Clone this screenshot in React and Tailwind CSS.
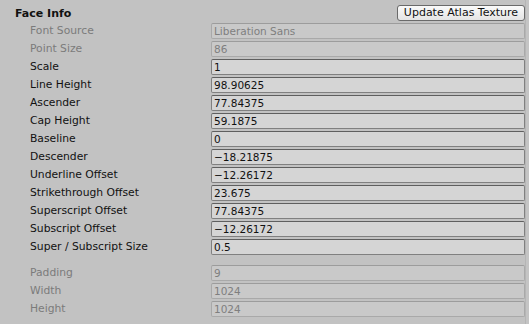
import React from "react";

const main = [
  ["Font Source", "Liberation Sans", true],
  ["Point Size", "86", true],
  ["Scale", "1"],
  ["Line Height", "98.90625"],
  ["Ascender", "77.84375"],
  ["Cap Height", "59.1875"],
  ["Baseline", "0"],
  ["Descender", "\u221218.21875"],
  ["Underline Offset", "\u221212.26172"],
  ["Strikethrough Offset", "23.675"],
  ["Superscript Offset", "77.84375"],
  ["Subscript Offset", "\u221212.26172"],
  ["Super / Subscript Size", "0.5"],
];

const atlas = [
  ["Padding", "9"],
  ["Width", "1024"],
  ["Height", "1024"],
];

function Row({ label, value, disabled }) {
  return (
    <div className="flex h-4 items-center mt-[2px] pl-[15px]">
      <span
        className={
          "w-[181px] shrink-0 leading-4 text-[10.75px] " +
          (disabled ? "text-[#7b7b7b]" : "text-[#111]")
        }
      >
        {label}
      </span>
      {disabled ? (
        <div className="flex-1 h-4 rounded-[2px] border border-[#a9a9a9] border-t-[#9c9c9c] bg-[#c9c9c9] pl-[2px] text-[10.5px] leading-[15px] text-[#7f7f7f]">
          {value}
        </div>
      ) : (
        <div className="flex-1 h-4 rounded-[2px] border border-[#808080] border-t-[#5f5f5f] bg-[#d5d5d5] pl-[2px] text-[10.5px] leading-[15px] text-[#111]">
          {value}
        </div>
      )}
    </div>
  );
}

export default function App() {
  return (
    <div className="flex w-[529px] h-[324px] bg-[#c2c2c2]">
      <div
        className="w-[525px] pl-[15px] pt-[5px] text-[11px]"
        style={{ fontFamily: '"DejaVu Sans", "Liberation Sans", sans-serif' }}
      >
        <div className="flex h-4 items-center justify-between">
          <span className="font-bold text-[#111] leading-4 pt-[2px]">Face Info</span>
          <button className="h-4 w-[128px] rounded-[3px] border border-[#6a6a6a] bg-gradient-to-b from-[#fafafa] to-[#e4e4e4] text-[11px] leading-[14px] text-[#111]">
            Update Atlas Texture
          </button>
        </div>
        {main.map(([l, v, d]) => (
          <Row key={l} label={l} value={v} disabled={d} />
        ))}
        <div className="h-2" />
        {atlas.map(([l, v]) => (
          <Row key={l} label={l} value={v} disabled />
        ))}
      </div>
      <div className="flex-1 border-l border-[#b5b5b5] bg-[#c4c4c4]" />
    </div>
  );
}
